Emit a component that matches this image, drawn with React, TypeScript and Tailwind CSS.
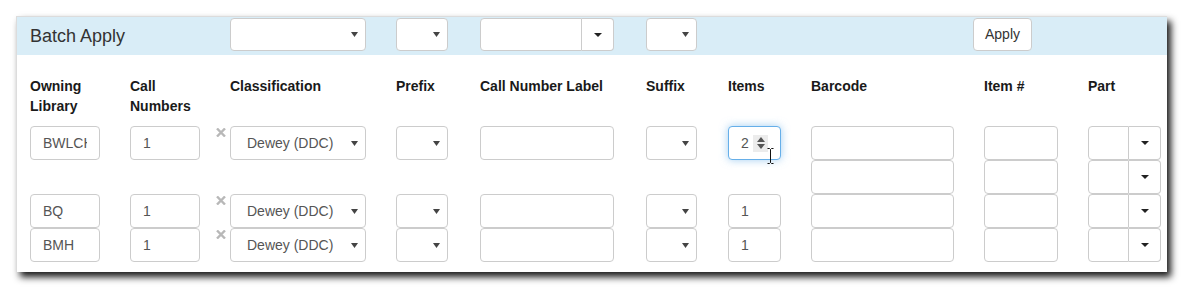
import React from "react";

const Arrow = () => (
  <svg width="7" height="5" viewBox="0 0 7 5" className="shrink-0">
    <path d="M0 0 L7 0 L3.5 5 Z" fill="#444" />
  </svg>
);

const Caret = () => (
  <svg width="8" height="4" viewBox="0 0 8 4">
    <path d="M0 0 L8 0 L4 4 Z" fill="#222" />
  </svg>
);

function Sel({ cls, text }: { cls: string; text?: string }) {
  return (
    <div
      className={`flex items-center justify-between rounded-[4px] border border-[#ccc] bg-white pl-[16px] pr-[7px] text-[14px] text-[#555] ${cls}`}
    >
      <span className="whitespace-nowrap">{text ?? ""}</span>
      <Arrow />
    </div>
  );
}

function Inp({ cls, value }: { cls: string; value?: string }) {
  return (
    <input
      readOnly
      value={value ?? ""}
      className={`block rounded-[4px] border border-[#ccc] bg-white px-[12px] text-[14px] text-[#555] outline-none ${cls}`}
    />
  );
}

function Combo({ cls, inputW, h }: { cls: string; inputW: string; h: string }) {
  return (
    <div className={`flex ${cls} ${h}`}>
      <div className={`rounded-l-[4px] border border-[#ccc] bg-white ${inputW}`} />
      <div className="flex flex-1 items-center justify-center rounded-r-[4px] border border-l-0 border-[#ccc] bg-white">
        <Caret />
      </div>
    </div>
  );
}

const XIcon = () => (
  <svg width="10" height="9" viewBox="0 0 10 9" className="ml-[16px] mt-[2px] shrink-0">
    <path d="M1 0.5 L9 8.5 M9 0.5 L1 8.5" stroke="#b8b8b8" strokeWidth="2.4" />
  </svg>
);

const GRID =
  "grid grid-cols-[100px_100px_166px_84px_166px_82px_83px_173px_104px_73px] pl-[13px]";

function Group({
  lib,
  items,
  count,
  focused,
}: {
  lib: string;
  items: string;
  count: number;
  focused?: boolean;
}) {
  const stack = Array.from({ length: count });
  return (
    <div className={`${GRID} items-start`}>
      <Inp cls="w-[70px] h-[34px]" value={lib} />
      <div className="flex items-start">
        <Inp cls="w-[70px] h-[34px]" value="1" />
        <XIcon />
      </div>
      <Sel cls="w-[136px] h-[34px]" text="Dewey (DDC)" />
      <Sel cls="w-[52px] h-[34px]" />
      <Inp cls="w-[134px] h-[34px]" />
      <Sel cls="w-[51px] h-[34px]" />
      {focused ? (
        <div className="relative flex h-[34px] w-[53px] items-center justify-between rounded-[4px] border border-[#66afe9] bg-white pl-[12px] pr-[12px] text-[14px] text-[#555] shadow-[0_0_8px_rgba(102,175,233,0.6)]">
          <span>{items}</span>
          <div className="flex h-[17px] w-[15px] flex-col items-center justify-center gap-[2px] bg-[#ececec]">
            <svg width="8" height="5" viewBox="0 0 8 5">
              <path d="M0 5 L8 5 L4 0 Z" fill="#555" />
            </svg>
            <svg width="8" height="5" viewBox="0 0 8 5">
              <path d="M0 0 L8 0 L4 5 Z" fill="#555" />
            </svg>
          </div>
          <svg
            width="7"
            height="16"
            viewBox="0 0 7 16"
            className="absolute left-[38px] top-[21px]"
          >
            <path
              d="M0.5 0.5 H2.5 L3.5 1.5 L4.5 0.5 H6.5 M3.5 1.5 V14.5 M0.5 15.5 H2.5 L3.5 14.5 L4.5 15.5 H6.5"
              stroke="#111"
              strokeWidth="1"
              fill="none"
            />
          </svg>
        </div>
      ) : (
        <Inp cls="w-[53px] h-[34px]" value={items} />
      )}
      <div className="flex flex-col">
        {stack.map((_, i) => (
          <Inp key={i} cls="w-[143px] h-[34px]" />
        ))}
      </div>
      <div className="flex flex-col">
        {stack.map((_, i) => (
          <Inp key={i} cls="w-[74px] h-[34px]" />
        ))}
      </div>
      <div className="flex flex-col">
        {stack.map((_, i) => (
          <Combo key={i} cls="w-[73px]" inputW="w-[41px]" h="h-[34px]" />
        ))}
      </div>
    </div>
  );
}

export default function App() {
  return (
    <div className="h-[290px] w-[1184px] bg-white pl-4 pt-4 font-['Liberation_Sans',Arial,sans-serif]">
      <div className="h-[256px] w-[1151px] border border-b-0 border-r-0 border-[#dcdcdc] bg-white shadow-[4px_5px_7px_rgba(0,0,0,0.9)]">
        {/* header band */}
        <div className={`${GRID} h-[38px] items-start bg-[#d9edf7] pt-px`}>
          <div className="col-span-2 flex h-[33px] items-center pt-[3px] text-[18px] text-[#333]">
            Batch Apply
          </div>
          <Sel cls="w-[136px] h-[33px]" />
          <Sel cls="w-[52px] h-[33px]" />
          <Combo cls="w-[134px]" inputW="w-[102px]" h="h-[33px]" />
          <Sel cls="w-[51px] h-[33px]" />
          <div />
          <div />
          <div className="ml-[-11px] flex h-[33px] w-[59px] items-center justify-center rounded-[4px] border border-[#ccc] bg-white text-[14px] text-[#333]">
            Apply
          </div>
          <div />
        </div>

        {/* column labels */}
        <div className={`${GRID} pt-[21px] text-[14px] font-bold leading-[20px] text-[#1a1a1a]`}>
          <div>
            Owning
            <br />
            Library
          </div>
          <div>
            Call
            <br />
            Numbers
          </div>
          <div>Classification</div>
          <div>Prefix</div>
          <div>Call Number Label</div>
          <div>Suffix</div>
          <div>Items</div>
          <div>Barcode</div>
          <div>Item #</div>
          <div className="h-[40px]">Part</div>
        </div>

        <div className="mt-[10px] flex flex-col">
          <Group lib="BWLCH" items="2" count={2} focused />
          <Group lib="BQ" items="1" count={1} />
          <Group lib="BMH" items="1" count={1} />
        </div>
      </div>
    </div>
  );
}
